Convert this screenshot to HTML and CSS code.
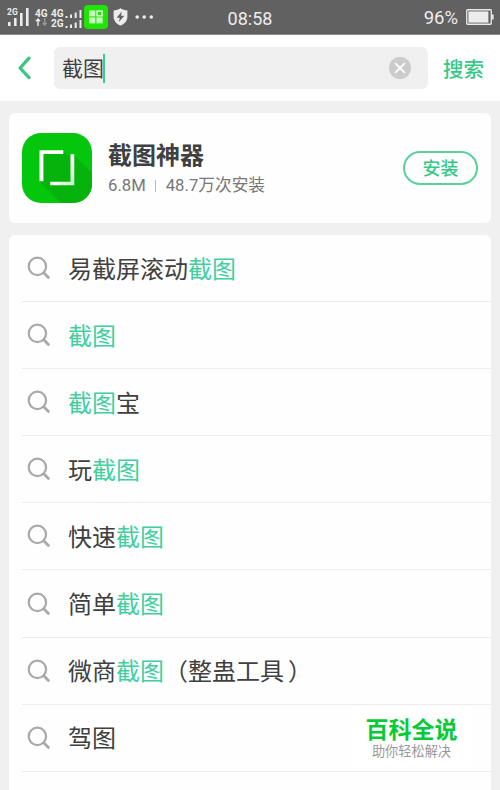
FILE: index.html
```html
<!DOCTYPE html>
<html lang="zh-CN">
<head>
  <meta charset="UTF-8">
  <meta name="viewport" content="width=device-width, initial-scale=1.0">
  <title>搜索 - 截图</title>
  <link rel="stylesheet" href="styles.css">
</head>
<body>
  <!-- Shared search icon -->
  <svg class="sprite" width="0" height="0">
    <symbol id="icon-search" viewBox="0 0 24 24">
      <circle cx="10.4" cy="10.4" r="8.7" fill="none" stroke="#a9a9a9" stroke-width="2.2"/>
      <path d="M16.8 16.8 L21.4 21.4" stroke="#a9a9a9" stroke-width="2.8" stroke-linecap="round"/>
    </symbol>
  </svg>

  <div class="status-bar">
    <div class="status-left">
      <div class="sim-one">
        <span class="net-label">2G</span>
        <svg width="22" height="18" viewBox="0 0 22 18" fill="#ececec">
          <rect x="1" y="14" width="2.6" height="4"/>
          <rect x="7" y="10" width="2.6" height="8"/>
          <rect x="13" y="5" width="2.6" height="13"/>
          <rect x="19" y="0" width="2.6" height="18"/>
        </svg>
      </div>
      <div class="sim-data">
        <span class="net-label big">4G</span>
        <svg width="13" height="8" viewBox="0 0 13 8" fill="none" stroke-width="1.4">
          <path d="M3 8 V1.2 M1 3.2 L3 1 L5 3.2" stroke="#ececec"/>
          <path d="M9.6 0 V6.8 M7.6 4.8 L9.6 7 L11.6 4.8" stroke="#999"/>
        </svg>
      </div>
      <div class="sim-two">
        <div class="sim-line">
          <span class="net-label big">4G</span>
          <svg width="17" height="8" viewBox="0 0 17 8" fill="#ececec">
            <rect x="0.5" y="6" width="2" height="2"/>
            <rect x="5" y="4.5" width="2" height="3.5"/>
            <rect x="9.7" y="2.5" width="2" height="5.5"/>
            <rect x="14.5" y="0" width="2" height="8"/>
          </svg>
        </div>
        <div class="sim-line">
          <span class="net-label big">2G</span>
          <svg width="17" height="8" viewBox="0 0 17 8" fill="#ececec">
            <rect x="0.5" y="6" width="2" height="2"/>
            <rect x="5" y="4.5" width="2" height="3.5"/>
            <rect x="9.7" y="2.5" width="2" height="5.5"/>
            <rect x="14.5" y="0" width="2" height="8"/>
          </svg>
        </div>
      </div>
      <svg class="app-badge" width="24" height="24" viewBox="0 0 24 24">
        <rect width="24" height="24" rx="4" fill="#1fe600"/>
        <rect x="5" y="5.4" width="6.3" height="6" fill="#c5f9bd"/>
        <rect x="5" y="12.4" width="6.3" height="6" fill="#c5f9bd"/>
        <rect x="12.4" y="12.4" width="6.3" height="6" fill="#c5f9bd"/>
        <rect x="13.1" y="6.1" width="5" height="4.7" fill="none" stroke="#f2fff0" stroke-width="1.4"/>
      </svg>
      <svg class="shield" width="15" height="18" viewBox="0 0 15 18">
        <path d="M7.5 0.3 C9.5 1.8 12 2.4 14.4 2.4 V8.5 C14.4 13 11.3 16.2 7.5 17.6 C3.7 16.2 0.6 13 0.6 8.5 V2.4 C3 2.4 5.5 1.8 7.5 0.3 Z" fill="#ececec"/>
        <path d="M8.8 3.5 L3.6 9.7 H6.8 L5.9 14 L11.3 7.8 H8 Z" fill="#606060"/>
      </svg>
      <svg class="more" width="19" height="4" viewBox="0 0 19 4" fill="#ececec">
        <circle cx="2.2" cy="2" r="1.8"/>
        <circle cx="9.2" cy="2" r="1.8"/>
        <circle cx="16.3" cy="2" r="1.8"/>
      </svg>
    </div>
    <div class="clock">08:58</div>
    <div class="status-right">
      <span>96%</span>
      <svg width="28" height="16" viewBox="0 0 28 16">
        <rect x="0.75" y="0.75" width="24.5" height="14.5" rx="0.8" fill="none" stroke="#ececec" stroke-width="1.3"/>
        <rect x="2.4" y="2.4" width="20" height="11.2" fill="#ececec"/>
        <rect x="26" y="5.5" width="1.6" height="5" fill="#ececec"/>
      </svg>
    </div>
  </div>

  <header class="search-header">
    <svg class="back" width="14" height="24" viewBox="0 0 14 24">
      <path d="M11 2.2 L2.1 12 L11 21.6" fill="none" stroke="#3cc581" stroke-width="3.3" stroke-linecap="round" stroke-linejoin="round"/>
    </svg>
    <div class="search-box">
      <span class="query">截图</span>
      <span class="caret"></span>
      <svg class="clear" width="22" height="22" viewBox="0 0 22 22">
        <circle cx="11" cy="11" r="11" fill="#cbcbcb"/>
        <path d="M6.6 6.6 L15.4 15.4 M15.4 6.6 L6.6 15.4" stroke="#fff" stroke-width="1.9" stroke-linecap="round"/>
      </svg>
    </div>
    <span class="search-btn">搜索</span>
  </header>

  <main>
    <section class="card app-card">
      <svg class="app-icon" width="70" height="70" viewBox="0 0 70 70">
        <defs>
          <clipPath id="icon-clip"><rect width="70" height="70" rx="19"/></clipPath>
          <linearGradient id="corner" x1="0" y1="0" x2="1" y2="1">
            <stop offset="0.5" stop-color="#fff"/>
            <stop offset="1" stop-color="#c4f3c5"/>
          </linearGradient>
        </defs>
        <g clip-path="url(#icon-clip)">
          <rect width="70" height="70" fill="#04c60c"/>
          <path d="M41 18 L45 22 L52 22 L80 50 V80 H49 L18 49 V18 Z" fill="#06b20c"/>
        </g>
        <path d="M17.5 17.3 H41.3 V20.9 H21.4 V48.3 H17.5 Z" fill="#fff"/>
        <path d="M48.5 21.2 H52.3 V52.2 H28.2 V48.7 H48.5 Z" fill="url(#corner)"/>
      </svg>
      <div class="app-info">
        <h1>截图神器</h1>
        <p><span>6.8M</span><i class="bar"></i><span>48.7万次安装</span></p>
      </div>
      <button class="install-btn">安装</button>
    </section>

    <ul class="card suggestions">
      <li><svg><use href="#icon-search"/></svg><div>易截屏滚动<em>截图</em></div></li>
      <li><svg><use href="#icon-search"/></svg><div><em>截图</em></div></li>
      <li><svg><use href="#icon-search"/></svg><div><em>截图</em>宝</div></li>
      <li><svg><use href="#icon-search"/></svg><div>玩<em>截图</em></div></li>
      <li><svg><use href="#icon-search"/></svg><div>快速<em>截图</em></div></li>
      <li><svg><use href="#icon-search"/></svg><div>简单<em>截图</em></div></li>
      <li><svg><use href="#icon-search"/></svg><div>微商<em>截图</em>（整蛊工具<span class="paren">）</span></div></li>
      <li><svg><use href="#icon-search"/></svg><div>驾图</div></li>
      <li></li>
    </ul>
  </main>

  <div class="watermark">
    <strong>百科全说</strong>
    <span>助你轻松解决</span>
  </div>
</body>
</html>
```
FILE: styles.css
```css
* {
  box-sizing: border-box;
}
body {
  margin: 0;
  height: 790px;
  overflow: hidden;
  position: relative;
  background-color: #f0f0f0;
  color: #404040;
  font-family: Roboto, "Noto Sans CJK SC", sans-serif;
}
svg {
  display: block;
  flex: none;
}
.sprite {
  position: absolute;
}

/* Status bar */
.status-bar {
  display: grid;
  grid-template-columns: 1fr 60px 1fr;
  height: 35px;
  background-color: #616161;
  border-bottom: 1px solid #8c8c8c;
  color: #ececec;
}
.status-left {
  display: flex;
  align-items: flex-start;
  padding-left: 7px;
}
.net-label {
  display: block;
  font-family: Roboto, sans-serif;
  font-size: 8.5px;
  line-height: 8px;
  font-weight: 700;
}
.net-label.big {
  font-size: 10px;
  line-height: 9px;
}
.sim-one {
  position: relative;
  width: 28px;
  padding-top: 8px;
}
.sim-one .net-label {
  position: absolute;
  left: 0;
  top: 8px;
}
.sim-data {
  width: 16px;
  padding-top: 9px;
}
.sim-two {
  width: 33px;
  padding-top: 8px;
}
.sim-line {
  display: flex;
  align-items: flex-end;
  justify-content: space-between;
  height: 10px;
  padding-right: 2px;
}
.app-badge {
  margin-top: 5px;
}
.shield {
  margin: 8px 0 0 5px;
}
.more {
  margin: 15px 0 0 7px;
}
.clock {
  padding-top: 6px;
  font-size: 18px;
  line-height: 26px;
  text-align: center;
}
.status-right {
  display: flex;
  justify-content: flex-end;
  gap: 8px;
  padding-right: 6px;
  font-size: 18.5px;
  line-height: 36px;
}
.status-right svg {
  margin-top: 9px;
}

/* Search header */
.search-header {
  display: flex;
  align-items: center;
  height: 66px;
  padding: 0 16px 0 18px;
  background-color: #fff;
}
.search-box {
  display: flex;
  align-items: center;
  width: 374px;
  height: 42px;
  margin-left: 22px;
  padding: 0 17px 0 8px;
  border-radius: 6px;
  background-color: #f0f0f0;
}
.query {
  padding-top: 1px;
  font-size: 21px;
  line-height: 30px;
}
.caret {
  width: 1.5px;
  height: 29px;
  margin-left: -1px;
  background-color: #3cce8b;
}
.clear {
  margin-left: auto;
}
.search-btn {
  margin-left: 15px;
  color: #36c887;
  font-size: 20.5px;
  font-weight: 500;
  white-space: nowrap;
}

/* Cards */
main {
  padding: 12px 9px 0;
}
.card {
  border-radius: 6px;
  background-color: #fefefe;
}
.app-card {
  display: flex;
  align-items: center;
  height: 110px;
  padding: 0 13px;
}
.app-info {
  margin-left: 16px;
  padding-top: 4px;
}
.app-info h1 {
  margin: 0;
  font-size: 24px;
  font-weight: 700;
  line-height: 32px;
}
.app-info p {
  display: flex;
  align-items: center;
  margin: 0;
  color: #777;
  font-size: 16.7px;
  line-height: 28px;
}
.bar {
  width: 1px;
  height: 12px;
  margin: 0 10px 0 9px;
  background-color: #bbb;
}
.install-btn {
  width: 75px;
  height: 34px;
  margin-left: auto;
  padding: 0 0 2px;
  border: 2px solid #5bd19a;
  border-radius: 17px;
  background: none;
  color: #36c887;
  font-family: inherit;
  font-size: 18px;
  font-weight: 500;
}

/* Suggestions */
.suggestions {
  margin: 12px 0 0;
  padding: 0 0 0 13px;
  border-radius: 6px 6px 0 0;
  list-style: none;
}
.suggestions li {
  display: flex;
  align-items: center;
  height: 67.1px;
  padding-left: 5px;
  border-bottom: 1px solid #ececec;
  font-size: 24px;
}
.suggestions li:last-child {
  height: 18px;
  border-bottom: 0;
}
.suggestions li svg {
  width: 24px;
  height: 24px;
  margin-right: 17px;
}
.suggestions li div {
  padding-bottom: 2px;
}
.suggestions em {
  color: #41cfa0;
  font-style: normal;
}
.paren {
  margin-left: 4px;
}

/* Corner mark floating over the list */
.watermark {
  position: absolute;
  left: 350px;
  top: 706px;
  width: 123px;
  height: 62px;
  padding-top: 9px;
  background-color: #fff;
  text-align: center;
}
.watermark strong {
  display: block;
  color: #06cb37;
  font-size: 23px;
  font-weight: 700;
  line-height: 31px;
}
.watermark span {
  display: block;
  color: #999;
  font-size: 13.2px;
  line-height: 12px;
}
```
